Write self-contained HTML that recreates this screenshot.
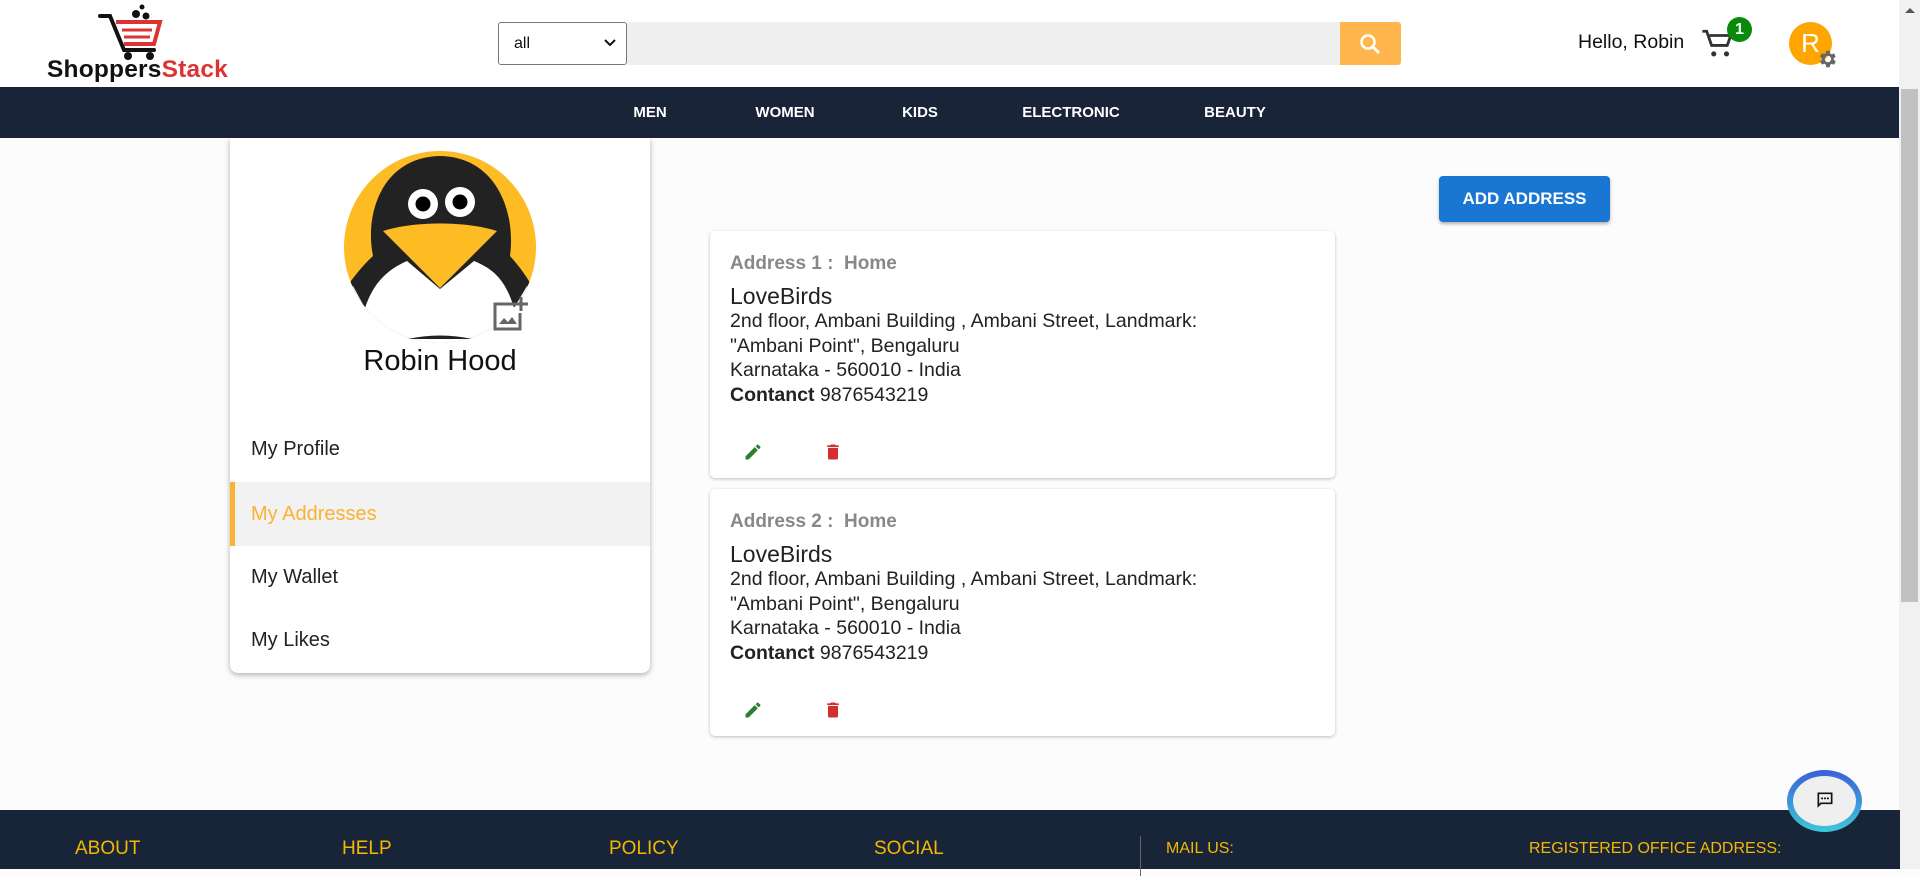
<!DOCTYPE html>
<html><head><meta charset="utf-8"><style>
*{margin:0;padding:0;box-sizing:border-box}
body{width:1920px;height:869px;overflow:hidden;background:#fcfcfc;font-family:"Liberation Sans",sans-serif;position:relative}
.abs{position:absolute}
header{position:absolute;left:0;top:0;width:1900px;height:87px;background:#fff}
nav{position:absolute;left:0;top:87px;width:1900px;height:51px;background:#1a2438}
nav span{position:absolute;top:17px;color:#fff;font-weight:bold;font-size:15px;transform:translateX(-50%)}
.card{position:absolute;background:#fff;border-radius:5px;box-shadow:0 1px 3px rgba(0,0,0,.25)}
.menu{position:absolute;left:0;width:420px;height:64px;line-height:64px;padding-left:21px;font-size:20px;color:#222}
.addr{position:absolute;left:20px;color:#222;font-size:19.5px;line-height:24.5px}
footer{position:absolute;left:0;top:810px;width:1900px;height:59px;background:#182438}
footer span{position:absolute;top:28px;color:#f5b800;font-size:19px}
</style></head><body>
<header>
 <svg class="abs" style="left:96px;top:4px" width="72" height="58" viewBox="0 0 72 58">
  <path d="M4 12 H14 L28 46 H58" fill="none" stroke="#111" stroke-width="4" stroke-linecap="round"/>
  <path d="M20 18 H64 L58 40 H28" fill="none" stroke="#d33" stroke-width="4"/>
  <path d="M26 26 H56 M28 33 H54" stroke="#d33" stroke-width="3"/>
  <circle cx="32" cy="52" r="4" fill="#111"/><circle cx="54" cy="52" r="4" fill="#111"/>
  <circle cx="40" cy="10" r="4" fill="#111"/><circle cx="50" cy="12" r="3.5" fill="#111"/><circle cx="46" cy="3" r="2.5" fill="#111"/>
 </svg>
 <div class="abs" style="left:47px;top:56px;font-size:24.5px;font-weight:bold;letter-spacing:0.2px;color:#111">Shoppers<span style="color:#d33">Stack</span></div>
 <div class="abs" style="left:498px;top:22px;width:129px;height:43px;border:1px solid #777;border-radius:3px;background:#fff;font-size:16px;line-height:41px;padding-left:15px;color:#111">all
  <svg class="abs" style="right:10px;top:16px" width="12" height="8" viewBox="0 0 12 8"><path d="M1 1l5 5 5-5" fill="none" stroke="#111" stroke-width="2"/></svg></div>
 <div class="abs" style="left:627px;top:22px;width:713px;height:43px;background:#efefef"></div>
 <div class="abs" style="left:1340px;top:22px;width:61px;height:43px;background:#ffb74d;border-radius:0 3px 3px 0">
  <svg class="abs" style="left:18px;top:10px" width="24" height="24" viewBox="0 0 24 24"><circle cx="10" cy="10" r="6.5" fill="none" stroke="#fff" stroke-width="2.5"/><path d="M15 15l6 6" stroke="#fff" stroke-width="3"/></svg></div>
 <div class="abs" style="left:1578px;top:31px;font-size:19.5px;color:#111">Hello, Robin</div>
 <svg class="abs" style="left:1700px;top:27px" width="36" height="34" viewBox="0 0 24 24"><path d="M1 3h3l3.5 10h11l2.5-7H6" fill="none" stroke="#333" stroke-width="2"/><circle cx="9" cy="19" r="1.8" fill="#333"/><circle cx="18" cy="19" r="1.8" fill="#333"/></svg>
 <div class="abs" style="left:1727px;top:17px;width:25px;height:25px;border-radius:50%;background:#0a8a0a;color:#fff;font-weight:bold;font-size:16px;text-align:center;line-height:25px">1</div>
 <div class="abs" style="left:1789px;top:22px;width:43px;height:43px;border-radius:50%;background:#ffa500;color:#fff;font-size:26px;text-align:center;line-height:43px">R</div>
 <svg class="abs" style="left:1816px;top:48px" width="22" height="22" viewBox="0 0 24 24"><path fill="#666" d="M19.4 13a7.5 7.5 0 000-2l2.1-1.6-2-3.5-2.5 1a7 7 0 00-1.7-1L15 3h-4l-.4 2.7a7 7 0 00-1.7 1l-2.5-1-2 3.5L6.6 11a7.5 7.5 0 000 2l-2.1 1.6 2 3.5 2.5-1a7 7 0 001.7 1L11 21h4l.4-2.7a7 7 0 001.7-1l2.5 1 2-3.5zM13 15.5A3.5 3.5 0 1113 8.5a3.5 3.5 0 010 7z"/></svg>
</header>
<nav><span style="left:650px">MEN</span><span style="left:785px">WOMEN</span><span style="left:920px">KIDS</span><span style="left:1071px">ELECTRONIC</span><span style="left:1235px">BEAUTY</span></nav>
<div class="abs" style="left:1899px;top:0;width:21px;height:869px;background:#f1f1f1"><div class="abs" style="left:2px;top:89px;width:17px;height:513px;background:#c1c1c1"></div>
 <div class="abs" style="left:6px;top:8px;border:5px solid transparent;border-bottom-color:#555;border-top:0"></div></div>

<div class="card" style="left:230px;top:138px;width:420px;height:535px;border-radius:0 0 8px 8px;box-shadow:0 2px 6px rgba(0,0,0,.3)">
 <svg class="abs" style="left:114px;top:13px" width="192" height="192" viewBox="0 0 192 192">
  <defs><clipPath id="c"><circle cx="96" cy="96" r="96"/></clipPath></defs>
  <g clip-path="url(#c)">
   <rect width="192" height="192" fill="#fdbb24"/>
   <path d="M29 105 C20 60 40 6 96 5 C152 6 172 60 166 105 C175 115 185 128 190 140 L192 192 H0 L0 140 C8 128 18 115 29 105Z" fill="#222"/>
   <path d="M0 155 L21 157 C30 130 45 118 63 110 L96 138 L130 110 C150 118 162 130 170 157 L192 155 V192 H0Z" fill="#fff"/>
   <path d="M0 140 L9 135 L21 157 L0 160Z" fill="#fff"/>
   <path d="M192 140 L183 135 L170 157 L192 160Z" fill="#fff"/>
   <rect x="0" y="160" width="192" height="40" fill="#fff"/>
  </g>
  <path d="M39 80 C70 70 122 70 153 80 L96 137 Z" fill="#fdbb24"/>
  <circle cx="79" cy="53" r="15" fill="#fff"/><circle cx="79" cy="53" r="7.5" fill="#000"/>
  <circle cx="116" cy="51" r="15" fill="#fff"/><circle cx="116" cy="51" r="7.5" fill="#000"/>
  <path d="M64 188 Q96 181 128 188Z" fill="#222"/>
 </svg>
 <svg class="abs" style="left:258px;top:157px" width="42" height="42" viewBox="0 0 42 42"><rect x="8" y="12" width="24" height="22" fill="#fff"/><path d="M26 9H7v25h25V18" fill="none" stroke="#666" stroke-width="3"/><path d="M33 2v14M26 9h14" stroke="#666" stroke-width="3"/><path d="M11 29l5-6 4 4 4-5 5 7z" fill="#666"/></svg>
 <div class="abs" style="left:0;width:420px;top:207px;text-align:center;font-size:29px;color:#111">Robin Hood</div>
 <div class="menu" style="top:279px">My Profile</div>
 <div class="menu" style="top:344px;background:#f2f2f2;border-left:5px solid #f9b233;padding-left:16px;color:#f9b233">My Addresses</div>
 <div class="menu" style="top:407px">My Wallet</div>
 <div class="menu" style="top:470px">My Likes</div>
</div>

<div class="abs" style="left:1439px;top:176px;width:171px;height:46px;background:#1976d2;border-radius:4px;color:#fff;font-size:17px;font-weight:bold;text-align:center;line-height:46px;box-shadow:0 2px 3px rgba(0,0,0,.3)">ADD ADDRESS</div>

<div class="card" style="left:710px;top:231px;width:625px;height:247px">
 <div class="addr" style="top:21px;color:#888;font-weight:bold;font-size:19px">Address 1 :&nbsp; Home</div>
 <div class="addr" style="top:53px;font-size:23px">LoveBirds</div>
 <div class="addr" style="top:78px">2nd floor, Ambani Building , Ambani Street, Landmark:<br>"Ambani Point", Bengaluru<br>Karnataka - 560010 - India<br><b>Contanct</b> 9876543219</div>
 <svg class="abs" style="left:33px;top:211px" width="20" height="20" viewBox="0 0 24 24"><path fill="#2e7d32" d="M3 17.25V21h3.75L17.8 9.94l-3.75-3.75zM20.7 7.04a1 1 0 000-1.41l-2.34-2.34a1 1 0 00-1.41 0l-1.83 1.83 3.75 3.75z"/></svg>
 <svg class="abs" style="left:113px;top:211px" width="20" height="20" viewBox="0 0 24 24"><path fill="#d32f2f" d="M6 19a2 2 0 002 2h8a2 2 0 002-2V7H6zM19 4h-3.5l-1-1h-5l-1 1H5v2h14z"/></svg>
</div>
<div class="card" style="left:710px;top:489px;width:625px;height:247px">
 <div class="addr" style="top:21px;color:#888;font-weight:bold;font-size:19px">Address 2 :&nbsp; Home</div>
 <div class="addr" style="top:53px;font-size:23px">LoveBirds</div>
 <div class="addr" style="top:78px">2nd floor, Ambani Building , Ambani Street, Landmark:<br>"Ambani Point", Bengaluru<br>Karnataka - 560010 - India<br><b>Contanct</b> 9876543219</div>
 <svg class="abs" style="left:33px;top:211px" width="20" height="20" viewBox="0 0 24 24"><path fill="#2e7d32" d="M3 17.25V21h3.75L17.8 9.94l-3.75-3.75zM20.7 7.04a1 1 0 000-1.41l-2.34-2.34a1 1 0 00-1.41 0l-1.83 1.83 3.75 3.75z"/></svg>
 <svg class="abs" style="left:113px;top:211px" width="20" height="20" viewBox="0 0 24 24"><path fill="#d32f2f" d="M6 19a2 2 0 002 2h8a2 2 0 002-2V7H6zM19 4h-3.5l-1-1h-5l-1 1H5v2h14z"/></svg>
</div>

<footer>
 <span style="left:75px">ABOUT</span><span style="left:342px">HELP</span><span style="left:609px">POLICY</span><span style="left:874px">SOCIAL</span>
 <div class="abs" style="left:1140px;top:26px;width:1px;height:40px;background:#666"></div>
 <span style="left:1166px;font-size:16px;top:30px">MAIL US:</span><span style="left:1529px;font-size:16px;top:30px">REGISTERED OFFICE ADDRESS:</span>
</footer>
<div class="abs" style="left:1787px;top:770px;width:75px;height:62px;border-radius:50%;background:linear-gradient(#3c5fd8,#3ec8d8);padding:6px">
 <div style="width:100%;height:100%;border-radius:50%;background:#efefef;position:relative">
  <svg class="abs" style="left:22px;top:14px" width="20" height="20" viewBox="0 0 24 24"><path d="M4 4h16v12H7l-3 3z" fill="none" stroke="#111" stroke-width="2"/><circle cx="8.5" cy="10" r="1.2"/><circle cx="12" cy="10" r="1.2"/><circle cx="15.5" cy="10" r="1.2"/></svg>
 </div></div>
</body></html>
